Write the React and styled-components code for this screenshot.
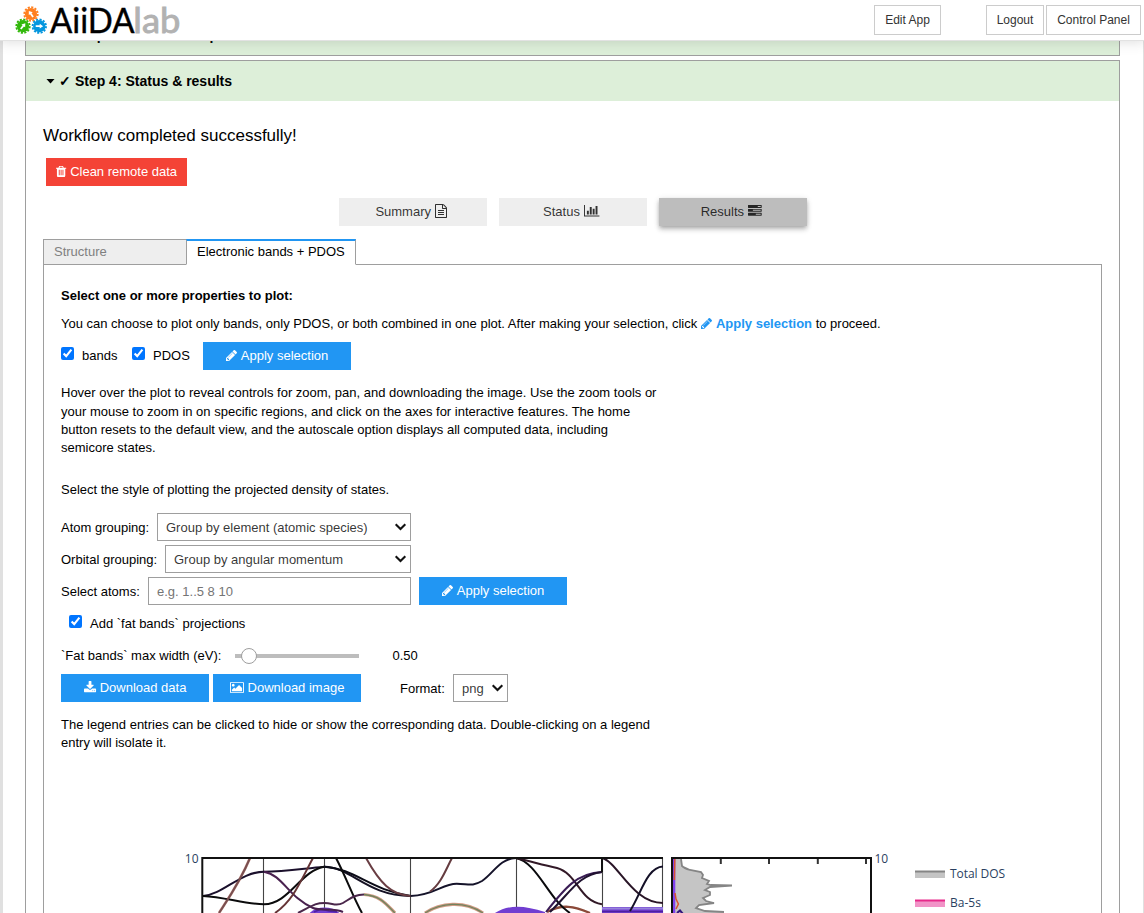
import React from "react";
import styled, { createGlobalStyle, css } from "styled-components";

const GlobalStyle = createGlobalStyle`
  * { box-sizing: border-box; }
  html, body { margin: 0; height: 913px; overflow: hidden; background: #e0e0e0; }
  body { font: 13px/18.2px "Liberation Sans", Arial, sans-serif; color: #000; }
`;

/* ---------- icons ---------- */
const ICONS = {
  pencil: [128, 1536, "M491 1536l91-91-235-235-91 91v107h128v128h107zm523-928q0-22-22-22-10 0-17 7l-542 542q-7 7-7 17 0 22 22 22 10 0 17-7l542-542q7-7 7-17zm-54-192l416 416-832 832h-416v-416zm683 96q0 53-37 90l-166 166-416-416 166-165q36-38 90-38 53 0 91 38l235 234q37 39 37 91z"],
  trash: [192, 1408, "M704 1376v-704q0-14-9-23t-23-9h-64q-14 0-23 9t-9 23v704q0 14 9 23t23 9h64q14 0 23-9t9-23zm256 0v-704q0-14-9-23t-23-9h-64q-14 0-23 9t-9 23v704q0 14 9 23t23 9h64q14 0 23-9t9-23zm256 0v-704q0-14-9-23t-23-9h-64q-14 0-23 9t-9 23v704q0 14 9 23t23 9h64q14 0 23-9t9-23zm-544-992h448l-48-117q-7-9-17-11h-317q-10 2-17 11zm928 32v64q0 14-9 23t-23 9h-96v948q0 83-47 143.5t-113 60.5h-832q-66 0-113-58.5t-47-141.5v-952h-96q-14 0-23-9t-9-23v-64q0-14 9-23t23-9h309l70-167q15-37 54-63t79-26h320q40 0 79 26t54 63l70 167h309q14 0 23 9t9 23z"],
  file: [128, 1536, "M1596 380q28 28 48 76t20 88v1152q0 40-28 68t-68 28h-1344q-40 0-68-28t-28-68v-1600q0-40 28-68t68-28h896q40 0 88 20t76 48zm-444-244v376h376q-10-29-22-41l-313-313q-12-12-41-22zm384 1528v-1024h-416q-40 0-68-28t-28-68v-416h-768v1536h1280zm-1024-864q0-14 9-23t23-9h704q14 0 23 9t9 23v64q0 14-9 23t-23 9h-704q-14 0-23-9t-9-23v-64zm736 224q14 0 23 9t9 23v64q0 14-9 23t-23 9h-704q-14 0-23-9t-9-23v-64q0-14 9-23t23-9h704zm0 256q14 0 23 9t9 23v64q0 14-9 23t-23 9h-704q-14 0-23-9t-9-23v-64q0-14 9-23t23-9h704z"],
  chart: [0, 2048, "M640 896v512h-256v-512h256zm384-512v1024h-256v-1024h256zm1024 1152v128h-2048v-1536h128v1408h1920zm-640-896v768h-256v-768h256zm384-384v1152h-256v-1152h256z"],
  tasks: [0, 1792, "M1024 1408h640v-128h-640v128zm-384-512h1024v-128h-1024v128zm640-512h384v-128h-384v128zm512 832v256q0 26-19 45t-45 19h-1664q-26 0-45-19t-19-45v-256q0-26 19-45t45-19h1664q26 0 45 19t19 45zm0-512v256q0 26-19 45t-45 19h-1664q-26 0-45-19t-19-45v-256q0-26 19-45t45-19h1664q26 0 45 19t19 45zm0-512v256q0 26-19 45t-45 19h-1664q-26 0-45-19t-19-45v-256q0-26 19-45t45-19h1664q26 0 45 19t19 45z"],
  download: [64, 1664, "M1344 1344q0-26-19-45t-45-19-45 19-19 45 19 45 45 19 45-19 19-45zm256 0q0-26-19-45t-45-19-45 19-19 45 19 45 45 19 45-19 19-45zm128-224v320q0 40-28 68t-68 28h-1472q-40 0-68-28t-28-68v-320q0-40 28-68t68-28h465l135 136q58 56 136 56t136-56l136-136h464q40 0 68 28t28 68zm-325-569q17 41-14 70l-448 448q-18 19-45 19t-45-19l-448-448q-31-29-14-70 17-39 59-39h256v-448q0-26 19-45t45-19h256q26 0 45 19t19 45v448h256q42 0 59 39z"],
  image: [0, 1920, "M640 576q0 80-56 136t-136 56-136-56-56-136 56-136 136-56 136 56 56 136zm1024 384v448h-1408v-192l320-320 160 160 512-512zm96-704h-1600q-13 0-22.5 9.5t-9.5 22.5v1216q0 13 9.5 22.5t22.5 9.5h1600q13 0 22.5-9.5t9.5-22.5v-1216q0-13-9.5-22.5t-22.5-9.5zm160 32v1216q0 66-47 113t-113 47h-1600q-66 0-113-47t-47-113v-1216q0-66 47-113t113-47h1600q66 0 113 47t47 113z"],
};

const Glyph = styled.svg`
  height: ${(p) => p.$size}px;
  margin-right: 4px;
  vertical-align: -1.86px;
  fill: currentColor;
  overflow: visible;
`;

function Icon({ name, size = 13 }) {
  const [x, w, d] = ICONS[name];
  return (
    <Glyph $size={size} viewBox={`${x} 0 ${w} 1792`} width={(w / 1792) * size} aria-hidden="true">
      <path d={d} />
    </Glyph>
  );
}

/* ---------- header ---------- */
const Header = styled.header`
  position: relative;
  z-index: 2;
  display: flex;
  align-items: flex-start;
  height: 41px;
  padding: 5px 3px 0 14px;
  background: #fff;
  border-bottom: 1px solid #e2e2e2;
  box-shadow: 0 0 12px 1px rgba(87, 87, 87, 0.2);
`;
const Logo = styled.svg`
  width: 170px;
  height: 32px;
  margin-right: auto;
  overflow: visible;
`;
const HeaderButton = styled.button`
  height: 30px;
  padding: 0;
  width: ${(p) => p.$w}px;
  margin-left: ${(p) => p.$gap || 0}px;
  font: 12px "Liberation Sans", Arial, sans-serif;
  color: #333;
  background: #fff;
  border: 1px solid #ccc;
`;

function Gear({ x, y, color, angle }) {
  return (
    <g transform={`translate(${x} ${y})`}>
      <circle r="6.1" fill={color} />
      <circle r="6.7" fill="none" stroke={color} strokeWidth="1.9" strokeDasharray="2.1 1.41" />
      <path d="M-3.6-.9H.4V-2.4L3.8 0 .4 2.4V.9H-3.6z" fill="#fff" transform={`rotate(${angle})`} />
    </g>
  );
}

function AiidaLogo() {
  return (
    <Logo viewBox="14 5 170 32">
      <Gear x={31} y={14} color="#ff7f1f" angle={-125} />
      <Gear x={23} y={26.2} color="#32b80b" angle={-52} />
      <Gear x={39.3} y={26.2} color="#0496de" angle={0} />
      <text x="50" y="32.6" fontFamily="Lato, sans-serif" fontSize="34" stroke="#000" strokeWidth="0.4" textLength="84.5" lengthAdjust="spacingAndGlyphs">AiiDA</text>
      <text x="133.3" y="32.6" fontFamily="Lato, sans-serif" fontSize="34.5" fill="#b2b2b2" stroke="#b2b2b2" strokeWidth="0.9" textLength="47" lengthAdjust="spacingAndGlyphs">lab</text>
    </Logo>
  );
}

/* ---------- accordion ---------- */
const Notebook = styled.main`
  height: 872px;
  margin: 0 1px 0 3px;
  padding: 0 23px 0 22px;
  background: #fff;
  overflow: hidden;
`;
const Step = styled.section`
  border: 1px solid #9e9e9e;
  margin-bottom: 4px;
  ${(p) => p.$scrolled && css`margin-top: -27px;`}
`;
const StepTitle = styled.div`
  display: flex;
  align-items: center;
  height: 40px;
  padding-left: 20px;
  background: #ddefd9;
  font-size: 14px;
  font-weight: bold;
  white-space: pre;
`;
const Caret = styled.span`
  width: 9px;
  height: 5px;
  margin-right: 4px;
  background: #000;
  clip-path: polygon(0 0, 100% 0, 50% 100%);
`;
const StepBody = styled.div`
  padding: 24px 17px 0;
`;
const Message = styled.div`
  height: 21px;
  font-size: 17px;
  line-height: 21px;
`;

/* ---------- widgets ---------- */
const tones = {
  primary: css`color: #fff; background: #2196f3;`,
  danger: css`color: #fff; background: #f44336;`,
  plain: css`color: rgba(0, 0, 0, 0.8); background: #eee;`,
  active: css`
    color: rgba(0, 0, 0, 0.8);
    background: #bdbdbd;
    box-shadow: 0 4px 5px 0 rgba(0, 0, 0, 0.14), 0 1px 6px 0 rgba(0, 0, 0, 0.12), 0 2px 4px -1px rgba(0, 0, 0, 0.2);
  `,
};
const Button = styled.button`
  width: ${(p) => p.$w || 148}px;
  height: 28px;
  padding: 0;
  border: 0;
  flex: none;
  font: 13px/28px "Liberation Sans", Arial, sans-serif;
  ${(p) => tones[p.$tone || "primary"]}
`;
const CleanRow = styled.div`
  display: flex;
  padding: 12px 0 0 3px;
`;
const ViewSwitch = styled.div`
  display: flex;
  justify-content: center;
  gap: 12px;
  padding: 12px 0 13px;
  margin-right: -1px;
`;
const TabBar = styled.div`
  position: relative;
  z-index: 1;
  display: flex;
  height: 26px;
  margin-bottom: -1px;
`;
const Tab = styled.div`
  padding: 0 10px;
  line-height: 24px;
  width: ${(p) => p.$w}px;
  border: 1px solid #9e9e9e;
  white-space: nowrap;
  ${(p) => p.$active
    ? css`background: #fff; border-bottom-color: #fff; border-top: 2px solid #2196f3; line-height: 22px;`
    : css`background: #eee; color: #808080; border-right: 0;`}
`;
const TabPanel = styled.div`
  height: 700px;
  padding: 22px 17px 0;
  border: 1px solid #9e9e9e;
`;
const Text = styled.p`
  margin: 0;
  padding-top: ${(p) => p.$top || 0}px;
  max-width: ${(p) => p.$max || "none"};
  b { color: ${(p) => p.$accent || "inherit"}; }
`;
const Row = styled.div`
  display: flex;
  align-items: center;
  height: 28px;
  margin-top: ${(p) => p.$top ?? 4}px;
  padding-left: ${(p) => p.$indent || 0}px;
  white-space: nowrap;
`;
const Check = styled.input.attrs({ type: "checkbox", defaultChecked: true })`
  width: 13px;
  height: 13px;
  margin: 0 8px 5px 0;
`;
const CheckLabel = styled.label`
  display: flex;
  align-items: center;
  height: 28px;
  width: ${(p) => (p.$w ? p.$w + "px" : "auto")};
`;
const Label = styled.label`
  width: ${(p) => p.$w}px;
  padding-top: ${(p) => p.$drop ?? 2}px;
  flex: none;
`;
const field = css`
  width: ${(p) => p.$w}px;
  height: 28px;
  border: 1px solid #9e9e9e;
  border-radius: 0;
  background: #fff;
  color: rgba(0, 0, 0, 0.8);
  font: 13px "Liberation Sans", Arial, sans-serif;
`;
const SelectBox = styled.div`
  display: grid;
  align-items: center;
  width: ${(p) => p.$w}px;
  > * { grid-area: 1 / 1; }
  > svg { justify-self: end; margin-right: 4px; pointer-events: none; }
`;
const NativeSelect = styled.select`
  ${field}
  appearance: none;
  padding: 0 8px;
`;
const Input = styled.input`
  ${field}
  padding: 4px 8px;
  margin-right: 8px;
  &::placeholder { color: #757575; }
`;
const Track = styled.div`
  display: flex;
  align-items: center;
  width: 124px;
  height: 4px;
  padding-left: 6px;
  margin: 0 33.5px 1px 13px;
  background: #bdbdbd;
`;
const Handle = styled.div`
  width: 16px;
  height: 16px;
  flex: none;
  border: 1px solid #9e9e9e;
  border-radius: 50%;
  background: #fff;
`;
const Plot = styled.svg`
  display: block;
  margin: 92.6px 0 0 119px;
`;

function Select({ w, value }) {
  return (
    <SelectBox $w={w}>
      <NativeSelect $w={w}><option>{value}</option></NativeSelect>
      <svg width="13" height="8" viewBox="0 0 13 8" fill="none">
        <path d="M1.7 1.2L6.5 6L11.3 1.2" stroke="#111" strokeWidth="2.1" />
      </svg>
    </SelectBox>
  );
}

/* ---------- plot ---------- */
const CURVES = [
  ["#1b102c", "M203 896C224 894 240 872 264 871.7C284 871.7 300 869 324.5 866.7"],
  ["#0b0b0c", "M203 896C225 897 245 904.3 264 904.3C289 904.3 301 870 324.5 866.7"],
  ["#794f50", "M219 913C230 896 240 882 250 858"],
  ["#49214f", "M264 871.7C283 875 288 897 313 908C320 911 335 908 343 912"],
  ["#653436", "M275 913C294 900 301 880 313 858"],
  ["#151123", "M324.5 866.7C351 867 367 896 410.7 896"],
  ["#0c0c18", "M324.5 866.7C356 869 370 890 410.7 896"],
  ["#0b0b0c", "M336 858C346 877 353 897 362 913"],
  ["#693d43", "M366 858C380 883 391 895 410.7 896"],
  ["#4a274b", "M298 913C312 906 315 903 324.5 903C333 903 336 907 343 903C350 899 354 894.5 364 894.5"],
  ["#15132a", "M410.7 896C435 895 442 883.7 456.7 883.7C468 883.7 472 887 482 881C494 873 499 859 516 858"],
  ["#653c40", "M430 891.5C441 884 446 869 452 858"],
  ["#09090c", "M516 858C537 862 549 900 570 913"],
  ["#321927", "M516 858C533 862 543 865 557 868C578 874 579 901 602 904.3"],
  ["#3a1c55", "M546 912C565 888 577 873 602 872"],
  ["#201230", "M550 912C571 892 578 875 602 872"],
  ["#291527", "M602 858C618 862 632 903 663 903"],
  ["#141027", "M630 911C641 894 647 867 663 866.5"],
];

const TOTAL_DOS =
  "681 859L682 866Q684 868 690 870L701 872L703 875L702 878L709 881L707 884L711 885L732 885.5L710 887L705 890L710 892L710 895L703 898L706 901L714 903L699 905L696 908L705 911L724 912";

function BandsPlot() {
  return (
    <Plot width="850" height="70" viewBox="180 845 850 70" fill="none">
      <path d="M263.5 858V915M324.5 858V915M410.5 858V915M516.5 858V915M602.5 858V915M662.5 858V915" stroke="#444" strokeWidth="1.1" />
      <path d="M364 894.5C381 896 386 904 395 913M425 913C440 903 464 900 483 913" stroke="#d29b84" strokeWidth="3.2" />
      <path d="M364 894.5C381 896 386 904 395 913M425 913C440 903 464 900 483 913" stroke="#71845f" strokeWidth="1.4" />
      <path d="M219 913C230 896 240 882 250 858" stroke="#d9aba1" strokeWidth="2.8" />
      <path d="M308 915C315 905 334 905 341 915ZM492 915C507 904 523 905 545 912V915ZM602 907H663V915H602Z" fill="#713ed1" />
      <path d="M602 908.5H663" stroke="#9883dc" strokeWidth="2" />
      <path d="M602 911.5H663M314 912L321 909L329 911L337 912" stroke="#4e20a1" strokeWidth="1.5" />
      <path d="M547 912C562 904 574 906 590 913" stroke="#8b4939" strokeWidth="2.4" />
      {CURVES.map(([color, d]) => (
        <path key={d} d={d} stroke={color} strokeWidth="2" />
      ))}
      <path d="M602 858V872" stroke="#111" strokeWidth="2" />
      <path d="M202.3 915V858H663" stroke="#111" strokeWidth="2" />
      <path d={`M674 859L${TOTAL_DOS}V915H674Z`} fill="#c5c5c5" />
      <path d={`M${TOTAL_DOS}`} stroke="#858585" strokeWidth="1.8" />
      <path d="M674 859V915" stroke="#8040ee" strokeWidth="2.6" />
      <path d="M674.8 859L674.4 880M675 893L676 899L678.4 904L676 909" stroke="#d9532f" strokeWidth="1.5" />
      <path d="M677 913L680 910.5L683 914" stroke="#32147d" strokeWidth="2" />
      <path d="M672 915V858H871V915" stroke="#111" strokeWidth="2" />
      <path d="M720.8 859V864M769 859V864M817.8 859V864M866 859V864" stroke="#333" strokeWidth="2" />
      <g fill="#2a3f5f" fontFamily="'Open Sans', sans-serif" fontSize="12">
        <text x="198.5" y="863" textAnchor="end">10</text>
        <text x="874.5" y="863">10</text>
        <text x="950" y="878" textLength="55">Total DOS</text>
        <text x="950" y="907">Ba-5s</text>
      </g>
      <path d="M915 874.5H945" stroke="#c4c4c4" strokeWidth="7" />
      <path d="M915 871.5H945" stroke="#858585" strokeWidth="2" />
      <path d="M915 903.5H945" stroke="#f193c7" strokeWidth="7" />
      <path d="M915 900.5H945" stroke="#e7298a" strokeWidth="2" />
    </Plot>
  );
}

export default function App() {
  return (
    <>
      <GlobalStyle />
      <Header>
        <AiidaLogo />
        <HeaderButton $w={67}>Edit App</HeaderButton>
        <HeaderButton $w={58} $gap={45}>Logout</HeaderButton>
        <HeaderButton $w={95} $gap={2}>Control Panel</HeaderButton>
      </Header>
      <Notebook>
        <Step $scrolled>
          <StepTitle><Caret />✓ Step 3: Choose computational resources</StepTitle>
        </Step>
        <Step>
          <StepTitle><Caret />✓ Step 4: Status &amp; results</StepTitle>
          <StepBody>
            <Message>Workflow completed successfully!</Message>
            <CleanRow>
              <Button $tone="danger" $w={141}><Icon name="trash" />Clean remote data</Button>
            </CleanRow>
            <ViewSwitch>
              <Button $tone="plain">Summary <Icon name="file" size={14} /></Button>
              <Button $tone="plain">Status <Icon name="chart" size={13.5} /></Button>
              <Button $tone="active">Results <Icon name="tasks" size={13.7} /></Button>
            </ViewSwitch>
            <TabBar>
              <Tab $w={143}>Structure</Tab>
              <Tab $active $w={170}>Electronic bands + PDOS</Tab>
            </TabBar>
            <TabPanel>
              <Text><b>Select one or more properties to plot:</b></Text>
              <Text $top={10} $accent="#2196f3">
                You can choose to plot only bands, only PDOS, or both combined in one plot. After making your selection, click{" "}
                <b><Icon name="pencil" />Apply selection</b> to proceed.
              </Text>
              <Row $top={9}>
                <CheckLabel $w={71}><Check />bands</CheckLabel>
                <CheckLabel $w={71}><Check />PDOS</CheckLabel>
                <Button><Icon name="pencil" />Apply selection</Button>
              </Row>
              <Text $top={14} $max="600px">
                Hover over the plot to reveal controls for zoom, pan, and downloading the image. Use the zoom tools or your
                mouse to zoom in on specific regions, and click on the axes for interactive features. The home button resets
                to the default view, and the autoscale option displays all computed data, including semicore states.
              </Text>
              <Text $top={24}>Select the style of plotting the projected density of states.</Text>
              <Row $top={14}>
                <Label $w={96}>Atom grouping:</Label>
                <Select w={254} value="Group by element (atomic species)" />
              </Row>
              <Row>
                <Label $w={104}>Orbital grouping:</Label>
                <Select w={246} value="Group by angular momentum" />
              </Row>
              <Row>
                <Label $w={87}>Select atoms:</Label>
                <Input $w={263} placeholder="e.g. 1..5 8 10" />
                <Button><Icon name="pencil" />Apply selection</Button>
              </Row>
              <Row $indent={8} $top={5}>
                <CheckLabel><Check />Add `fat bands` projections</CheckLabel>
              </Row>
              <Row>
                <Label $w={161} $drop={0}>`Fat bands` max width (eV):</Label>
                <Track><Handle /></Track>
                0.50
              </Row>
              <Row>
                <Button><Icon name="download" />Download data</Button>
                <Row $top={0} $indent={4}><Button><Icon name="image" />Download image</Button></Row>
                <Row $top={0} $indent={39}>
                  <Label $w={53}>Format:</Label>
                  <Select w={55} value="png" />
                </Row>
              </Row>
              <Text $top={13.6} $max="600px">
                The legend entries can be clicked to hide or show the corresponding data. Double-clicking on a legend entry
                will isolate it.
              </Text>
              <BandsPlot />
            </TabPanel>
          </StepBody>
        </Step>
      </Notebook>
    </>
  );
}
